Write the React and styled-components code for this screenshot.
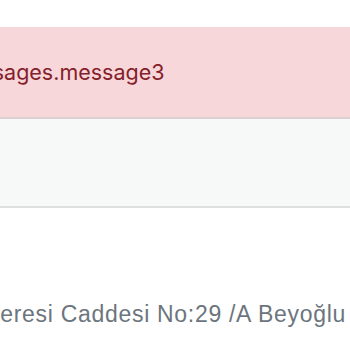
import React from 'react'
import styled, { createGlobalStyle } from 'styled-components';

const GlobalStyle = createGlobalStyle`
    html, body {
        margin: 0;
        padding: 0;
        background: #fff;
        overflow: hidden;
    }
    body {
        font-family: Inter, "Liberation Sans", sans-serif;
    }
`;

export default function App() {
  return (
    <Page>
        <GlobalStyle />
        <Alert>
            <AlertText>messages.message3</AlertText>
        </Alert>
        <Panel />
        <Footer>
            <Address>Meclis-i Mebusan Kaleresi Caddesi No:29 /A Beyoğlu</Address>
        </Footer>
    </Page>
  )
};

const Page = styled.div`
    width: 350px;
    height: 350px;
    overflow: hidden;
    padding-top: 27px;
    box-sizing: border-box;
`;

const Alert = styled.div`
    background: #f8d7da;
    color: #842029;
    height: 90px;
    display: flex;
    align-items: center;
    border-bottom: 2px solid #dcd0d1;
    overflow: hidden;
    white-space: nowrap;
`;

const AlertText = styled.div`
    font-size: 21.5px;
    margin-left: -50px;
    margin-top: -1px;
`;

const Panel = styled.div`
    background: #f7f9f9;
    height: 87px;
    border-bottom: 2px solid #dedfe0;
`;

const Footer = styled.div`
    display: flex;
    justify-content: flex-end;
    padding: 93px 4px 0 0;
    overflow: hidden;
    white-space: nowrap;
`;

const Address = styled.div`
    font-family: "Liberation Sans", Arial, sans-serif;
    font-size: 23px;
    letter-spacing: 0.7px;
    color: #6c757d;
`;
